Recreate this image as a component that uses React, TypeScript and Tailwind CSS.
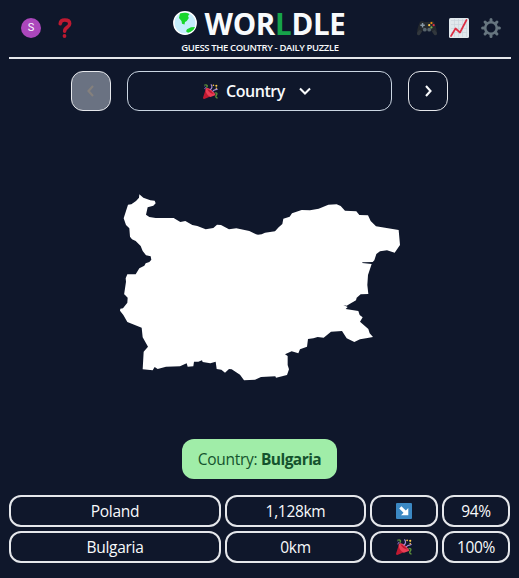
import React from 'react';

const OUTLINE =
  '42,330 48,290 47,280 52,268 77,268 88,250 103,242 107,235 118,231 124,224 122,214 108,211 98,198 92,183 77,168 66,163 60,155 58,130 48,120 41,100 54,59 64,58 78,48 87,38 88,28 100,38 121,46 134,47 137,55 130,62 113,67 108,89 118,96 137,99 191,99 211,111 226,108 247,120 262,123 287,133 310,129 321,119 333,120 357,133 379,130 418,138 438,148 444,149 455,148 465,143 495,139 506,127 517,117 520,101 539,95 546,85 575,75 600,76 626,71 655,59 680,58 692,63 705,77 739,79 748,90 774,91 782,108 798,124 866,135 870,180 854,203 831,196 810,199 799,207 793,226 788,231 757,232 757,234 785,237 774,270 772,300 775,327 752,328 740,338 738,346 720,356 710,362 700,360 713,366 707,372 745,378 749,390 758,397 750,410 775,432 779,445 789,456 768,460 750,463 733,471 710,460 696,438 663,440 641,458 623,456 610,460 594,462 591,485 570,493 565,505 545,499 525,508 533,513 533,540 537,553 531,570 498,578 496,574 453,576 435,584 402,586 390,569 365,553 357,552 345,563 334,554 320,552 317,530 301,535 278,531 276,526 265,530 252,530 250,544 233,545 230,535 210,544 168,545 143,552 134,546 128,556 98,553 101,500 114,485 98,457 95,428 52,411 40,390 30,377 31,371 39,370 52,353 53,338 43,328';

function Party({ className }: { className: string }) {
  return (
    <svg viewBox="0 0 36 36" className={className}>
      <path d="M7 11 0 33c-.5 1.500 1 3 3 3l26-11z" fill="#be1931" />
      <path d="M6 13c2-6 10-3 15 2s11 10 8 12l-11 4C11 28 6 21 6 13" fill="#ea3d55" />
      <path d="M10 12c6 1 12 7 16 12-7-1-13-5-16-12" fill="#be1931" />
      <path d="M17 14c5-3 6-8 2-13M23 18c4-6 8-3 12-6" fill="none" stroke="#aa8dd8" strokeWidth="2.800" />
      <path d="M3 3c7-3 9 2 5 6M28 22c5-2 7 1 4 5s0 6 3 7" fill="none" stroke="#5c913b" strokeWidth="3.200" />
      <path d="M3 11c4 1 4-3 1-5" fill="none" stroke="#9266cc" strokeWidth="2.200" />
      <g fill="#ffcc4d"><circle cx="25" cy="3" r="2" /><circle cx="32" cy="4" r="2.500" /><circle cx="32" cy="10" r="1.800" /></g>
    </svg>
  );
}

function Globe() {
  return (
    <svg viewBox="0 0 24 24" className="h-6 w-6">
      <circle cx="12" cy="12" r="11.200" fill="#c6eefc" stroke="#fff" strokeWidth="1.400" />
      <path d="M7 2.500C10 1.500 14 1.500 16.500 3L15 5l.8 2-2 3-1.800 1-.5 2.500-2.500-.7L8.500 10 6 7z" fill="#19d62b" />
      <path d="m22 16-4 .2-4 2-1 2 2 1.500c3-.5 6-2.500 7-5.700" fill="#19d62b" />
    </svg>
  );
}

function Gamepad() {
  return (
    <svg viewBox="0 0 36 28" className="h-4 w-5">
      <path d="M5 4c2-3 6-3 8-1h10c2-2 6-2 8 1 2 4 5 14 5 19 0 5-4 5-7 1l-3-5H10l-3 5c-3 4-7 4-7-1C0 18 3 8 5 4" fill="#24292e" />
      <path d="M4 17 0 23c0 4 3 5 5 3l4-6zM32 17l4 6c0 4-3 5-5 3l-4-6z" fill="#31373d" />
      <path d="M10 5v8M6 9h8" stroke="#8899a6" strokeWidth="2.600" />
      <circle cx="14" cy="17" r="3.400" fill="#57646d" /><circle cx="22" cy="17" r="3.400" fill="#57646d" />
      <circle cx="26" cy="5" r="2" fill="#f4900c" /><circle cx="26" cy="13" r="2" fill="#77b255" /><circle cx="22" cy="9" r="2" fill="#ffcc4d" /><circle cx="30" cy="9" r="2" fill="#dd2e44" />
    </svg>
  );
}

function Chart() {
  return (
    <svg viewBox="0 0 20 20" className="h-5 w-5">
      <rect width="20" height="20" rx="1.500" fill="#e1e8ed" />
      <path d="M2 2.500h16M2 6.500h16M2 10.500h16M2 14.500h16M5.500 1v18M9.500 1v18M13.500 1v18M17.500 1v18" stroke="#ccd6dd" strokeWidth=".7" />
      <path d="m2 18 4.500-7.500 4.500 4L17.500 2" fill="none" stroke="#dd2e44" strokeWidth="1.700" strokeLinejoin="round" strokeLinecap="round" />
    </svg>
  );
}

function Gear() {
  return (
    <svg viewBox="0 0 20 20" className="h-5 w-5">
      <g stroke="#66757f" strokeWidth="3" strokeLinecap="round">
        <path d="M10 1.600v2M10 16.400v2M1.600 10h2M16.400 10h2M4.060 4.060l1.400 1.400M14.540 14.540l1.400 1.400M4.060 15.940l1.400-1.400M14.540 5.460l1.400-1.400" />
      </g>
      <circle cx="10" cy="10" r="5.800" fill="none" stroke="#66757f" strokeWidth="2.600" />
    </svg>
  );
}

function Question() {
  return (
    <svg viewBox="0 0 14 20" className="h-5 w-3.5">
      <path d="M2.200 5.800C2.400 3 4.300 2.100 6.800 2.100c3 0 4.900 1.400 4.900 3.700 0 3.700-5.100 3.300-5.100 7.500" fill="none" stroke="#be1931" strokeWidth="3.500" strokeLinecap="round" />
      <circle cx="6.500" cy="18" r="1.900" fill="#be1931" />
    </svg>
  );
}

function Arrow() {
  return (
    <svg viewBox="0 0 16 16" className="h-4 w-4">
      <rect width="16" height="16" rx="1" fill="#3b88c3" />
      <path d="M3.200 5.400 5.400 3.200 9.800 7.500 12.300 5v7.300H5l2.500-2.500z" fill="#fff" />
    </svg>
  );
}

function Chevron({ d }: { d: string }) {
  return (
    <svg viewBox="0 0 20 20" className="h-5 w-5" fill="none" stroke="currentColor" strokeWidth="2.100">
      <path d={d} />
    </svg>
  );
}

const CELL = 'flex h-8 items-center justify-center rounded-xl border-2 border-gray-200 pb-px';

function Row({ name, distance, percent, icon }: { name: string; distance: string; percent: string; icon: React.ReactNode }) {
  return (
    <div className="grid grid-cols-[212px_141px_68px_68px] gap-1">
      <div className={CELL}>{name}</div>
      <div className={CELL}>{distance}</div>
      <div className="flex h-8 items-center justify-center rounded-xl border-2 border-gray-200">{icon}</div>
      <div className={CELL}>{percent}</div>
    </div>
  );
}

export default function App() {
  return (
    <div className="flex h-[578px] w-[519px] flex-col overflow-hidden bg-slate-900 pl-[9px] font-['Open_Sans','Noto_Sans',sans-serif] text-[15.5px] leading-6 tracking-[-0.3px] text-slate-50">
      <header className="flex h-[59px] w-[502px] shrink-0 items-start justify-between border-b-2 border-gray-200">
        <div className="flex w-[100px] items-center gap-[17px] pt-[18px] pl-3">
          <div className="flex h-5 w-5 items-center justify-center rounded-full bg-[#ab47bc] font-[Roboto] text-[11px] leading-5 tracking-normal">S</div>
          <Question />
        </div>
        <div className="flex flex-col items-center">
          <div className="flex h-10 items-center gap-[7px] pt-[5px] pr-px">
            <Globe />
            <h1 className="pt-0.5 text-[29.5px] leading-9 font-bold tracking-[-0.3px] whitespace-nowrap">
              WOR<span className="text-[#16a34a]">L</span>DLE
            </h1>
          </div>
          <p className="pt-px text-[9.5px] leading-[14px] font-semibold tracking-[-0.37px] whitespace-nowrap">GUESS THE COUNTRY - DAILY PUZZLE</p>
        </div>
        <div className="flex w-[100px] items-center justify-end gap-3 pt-[18px] pr-[10px]">
          <Gamepad />
          <Chart />
          <Gear />
        </div>
      </header>

      <nav className="mt-3 flex h-10 w-[502px] shrink-0 gap-4 pl-[62px]">
        <button className="flex w-10 items-center justify-center rounded-xl border border-gray-200 bg-gray-500 text-[#85807d]">
          <Chevron d="m12 5-4.500 5 4.500 5" />
        </button>
        <button className="flex w-[265px] items-center justify-center rounded-xl border border-slate-300 pr-px font-semibold">
          <Party className="mr-2 h-[15px] w-[15px]" />
          <span className="w-[59px] text-left text-base leading-6 tracking-[-0.45px]">Country</span>
          <span className="ml-[10px]"><Chevron d="m5 7.500 5 5 5-5" /></span>
        </button>
        <button className="flex w-10 items-center justify-center rounded-xl border border-gray-200">
          <Chevron d="m8 5 4.500 5L8 15" />
        </button>
      </nav>

      <svg viewBox="0 0 900 600" className="mt-[74px] ml-[101px] h-[200px] w-[300px] shrink-0">
        <polygon points={OUTLINE} fill="#fff" />
      </svg>

      <div className="mt-[54px] ml-[173px] flex h-10 w-[155px] shrink-0 items-center justify-center rounded-xl bg-[#a0eda8] whitespace-pre text-[#14532d]">
        Country: <b className="font-bold tracking-[-0.55px]">Bulgaria</b>
      </div>

      <main className="mt-4 flex flex-col gap-1">
        <Row name="Poland" distance="1,128km" percent="94%" icon={<Arrow />} />
        <Row name="Bulgaria" distance="0km" percent="100%" icon={<Party className="h-4 w-4" />} />
      </main>
    </div>
  );
}
